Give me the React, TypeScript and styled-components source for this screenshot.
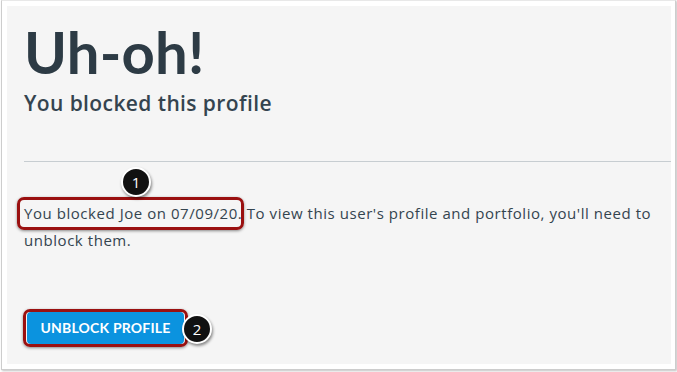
import React from 'react'
import styled, { createGlobalStyle } from 'styled-components'

const GlobalStyle = createGlobalStyle`
 * { box-sizing: border-box; }
 html, body {
  margin: 0;
  padding: 0;
  background: #fff;
 }
 body {
  font-family: Lato, "Open Sans", Arial, sans-serif;
  -webkit-font-smoothing: antialiased;
 }
`

const Page = styled.div`
 width: 677px;
 height: 372px;
 padding: 0 0 0 1px;
`

const Frame = styled.div`
 width: 675px;
 height: 370px;
 background: #fff;
 border: 1px solid #cdcdcd;
 border-top-color: #e8e8e8;
 box-shadow: 1px 1px 2px rgba(0, 0, 0, 0.25);
 padding: 5px 4px 5px 5px;
`

const Panel = styled.div`
 height: 100%;
 background: #f5f5f5;
 padding: 11px 0 0 17px;
 display: flex;
 flex-direction: column;
`

const Heading = styled.h1`
 margin: 0;
 font-size: 58px;
 line-height: 1.2;
 font-weight: 700;
 color: #2d3b45;
 letter-spacing: 0.2px;
`

const SubHeading = styled.h2`
 margin: 3px 0 0;
 font-family: "Open Sans", Lato, Arial, sans-serif;
 font-size: 21px;
 line-height: 27px;
 font-weight: 600;
 color: #34444f;
 letter-spacing: 0.4px;
`

const Divider = styled.hr`
 margin: 44px 0 0;
 border: 0;
 border-top: 1px solid #c7cdd1;
 height: 0;
`

const MessageBlock = styled.div`
 position: relative;
 margin-top: 38px;
`

const Message = styled.p`
 margin: 0;
 padding-right: 6px;
 font-family: "Open Sans", Lato, Arial, sans-serif;
 font-size: 15px;
 line-height: 27px;
 color: #34444f;
 letter-spacing: 0.55px;
`

// annotation ring drawn over content
const Highlight = styled.div<{ $left: number; $top: number; $w: number; $h: number }>`
 position: absolute;
 left: ${p => p.$left}px;
 top: ${p => p.$top}px;
 width: ${p => p.$w}px;
 height: ${p => p.$h}px;
 border: 3px solid #9a1010;
 border-radius: 7px;
 box-shadow: 0 1px 3px rgba(0, 0, 0, 0.45);
 pointer-events: none;
`

const Badge = styled.span<{ $left: number; $top: number }>`
 position: absolute;
 left: ${p => p.$left}px;
 top: ${p => p.$top}px;
 width: 30px;
 height: 30px;
 border-radius: 50%;
 background: #111;
 border: 2px solid #fff;
 box-shadow: 1px 2px 3px rgba(0, 0, 0, 0.45);
 color: #fff;
 font-family: "Open Sans", Arial, sans-serif;
 font-size: 15px;
 font-weight: 400;
 letter-spacing: 0;
 line-height: 26px;
 text-align: center;
 z-index: 2;
`

const ButtonRow = styled.div`
 margin-top: 58px;
 display: flex;
`

const ButtonWrap = styled.div`
 position: relative;
 margin-left: 3px;
`

const UnblockButton = styled.button`
 width: 157px;
 height: 32px;
 border: 0;
 border-radius: 4px;
 background: #0b93df;
 color: #fff;
 font-family: Lato, "Open Sans", Arial, sans-serif;
 font-size: 14px;
 font-weight: 700;
 letter-spacing: 0.2px;
 text-transform: uppercase;
 cursor: pointer;
 padding: 0;
`

export default function App() {
 return (
  <>
   <GlobalStyle />
   <Page>
    <Frame>
     <Panel>
      <Heading>Uh-oh!</Heading>
      <SubHeading>You blocked this profile</SubHeading>
      <Divider />
      <MessageBlock>
       <Message>
        You blocked Joe on 07/09/20. To view this user's profile and portfolio, you'll need to unblock them.
       </Message>
       <Highlight $left={-7} $top={-3} $w={227} $h={33} />
       <Badge $left={97} $top={-33}>1</Badge>
      </MessageBlock>
      <ButtonRow>
       <ButtonWrap>
        <UnblockButton>Unblock Profile</UnblockButton>
        <Highlight $left={-4} $top={-3} $w={165} $h={38} />
        <Badge $left={155} $top={2}>2</Badge>
       </ButtonWrap>
      </ButtonRow>
     </Panel>
    </Frame>
   </Page>
  </>
 )
}
